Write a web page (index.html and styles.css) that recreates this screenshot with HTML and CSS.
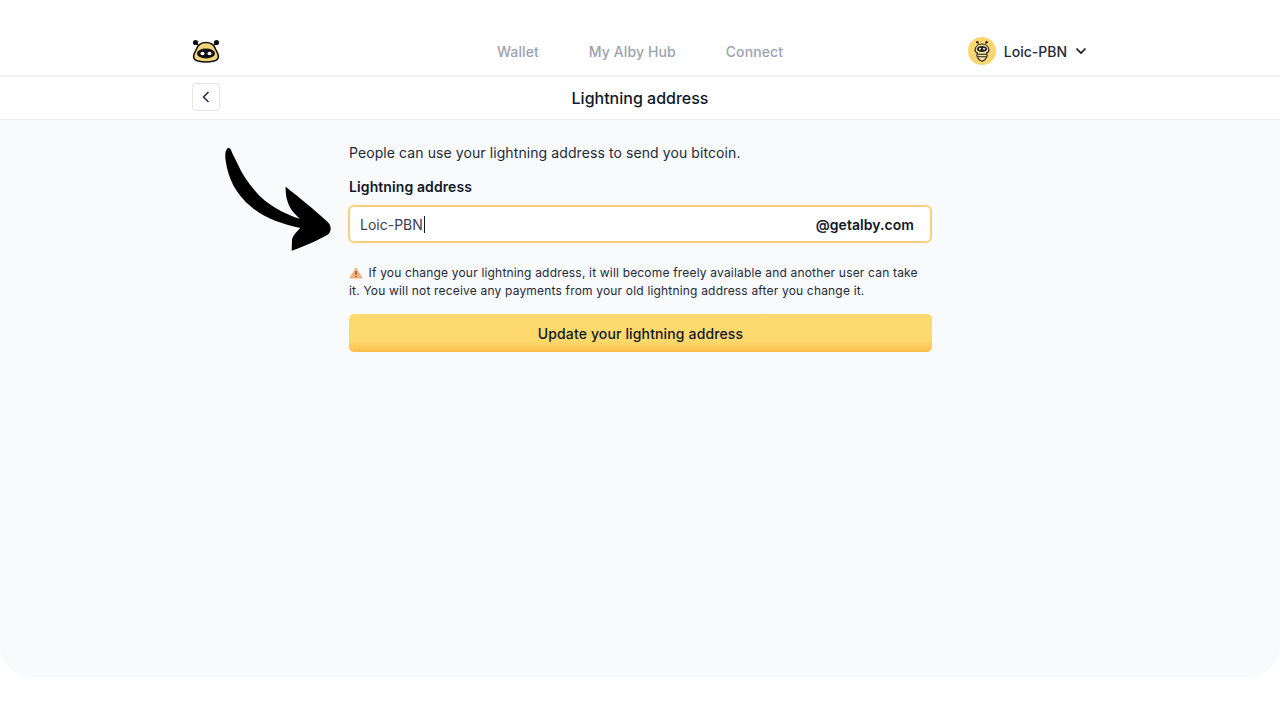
FILE: index.html
```html
<!DOCTYPE html>
<html lang="en">
  <head>
    <meta charset="UTF-8" />
    <meta name="viewport" content="width=device-width, initial-scale=1.0" />
    <title>Lightning address</title>
    <link rel="stylesheet" href="styles.css">
  </head>
  <body>
    <div class="app">
      <header class="topbar">
        <div class="container topbar-inner">
          <svg class="logo" width="28" height="24" viewBox="0 0 28 24">
            <circle cx="3.5" cy="3.5" r="2.6" fill="#111" />
            <circle cx="24.5" cy="3.5" r="2.6" fill="#111" />
            <path d="M3.5 3.5 8 8M24.5 3.500 20 8" stroke="#111" stroke-width="1.2" />
            <path d="M14 3.5C9 3.500 6 6 4.500 10 3 13 1.800 15 1.600 17 1.500 20 4 21.500 6 22 11 23.200 17 23.200 22 22 24 21.500 26.500 20 26.400 17 26.200 15 25 13 23.500 10 22 6 19 3.500 14 3.500Z" fill="#f2d579" stroke="#111" stroke-width="1.6" />
            <ellipse cx="14" cy="14.500" rx="9" ry="5" fill="#111" />
            <ellipse cx="10.500" cy="14.500" rx="2" ry="1.800" fill="#fff" />
            <ellipse cx="17.500" cy="14.500" rx="2" ry="1.800" fill="#fff" />
          </svg>
          <nav class="nav">
            <a>Wallet</a>
            <a>My Alby Hub</a>
            <a>Connect</a>
          </nav>
          <div class="account">
            <svg class="avatar" width="28" height="28" viewBox="0 0 30 30">
              <circle cx="15" cy="15" r="15" fill="#fad671" />
              <circle cx="10" cy="5.500" r="1.300" fill="#222" />
              <circle cx="20" cy="5.500" r="1.300" fill="#222" />
              <path d="M10 5.500 12 9M20 5.500 18 9" stroke="#222" stroke-width=".8" />
              <path d="M15 7.500C11 7.500 8 10 7.600 13.500 7.400 15.500 8.500 16.500 10 16.800L9.500 20C10.500 23.500 13 25.500 15 26 17 25.500 19.500 23.500 20.500 20L20 16.800C21.500 16.500 22.600 15.500 22.400 13.500 22 10 19 7.500 15 7.500Z" fill="#f5e3a4" stroke="#222" stroke-width="1.200" />
              <ellipse cx="15" cy="12.800" rx="5.500" ry="3.200" fill="#222" />
              <circle cx="12.800" cy="12.600" r="1.100" fill="#fff" />
              <circle cx="17.200" cy="12.600" r="1.100" fill="#fff" />
              <path d="M10 18.500H20M10.500 21.200H19.500" stroke="#222" stroke-width="1.200" />
            </svg>
            <span class="account-name">Loic-PBN</span>
            <svg class="chevron" width="12" height="8" viewBox="0 0 12 8">
              <path d="M1.500 1.500 6 6 10.500 1.500" fill="none" stroke="#111827" stroke-width="1.700" />
            </svg>
          </div>
        </div>
      </header>

      <div class="subbar">
        <div class="container subbar-inner">
          <button class="back">
            <svg width="8" height="12" viewBox="0 0 8 12">
              <path d="M6.500 1 1.500 6 6.500 11" fill="none" stroke="#1f2937" stroke-width="1.500" />
            </svg>
          </button>
          <h1>Lightning address</h1>
        </div>
      </div>

      <main class="content">
        <p class="intro">People can use your lightning address to send you bitcoin.</p>
        <label class="field-label">Lightning address</label>
        <div class="input">
          <span class="input-value">Loic-PBN</span>
          <span class="input-suffix">@getalby.com</span>
        </div>
        <p class="warning"><svg class="warn-icon" width="14" height="12" viewBox="0 0 14 12"><path d="M7 1 13 11H1Z" fill="#f3b27a" stroke="#f3b27a" stroke-linejoin="round" /><path d="M7 4V8M7 9V10.300" stroke="#6b4423" stroke-width="1.200" /></svg> If you change your lightning address, it will become freely available and another user can take it. You will not receive any payments from your old lightning address after you change it.</p>
        <button class="submit">Update your lightning address</button>
      </main>

      <svg class="arrow" width="120" height="115" viewBox="0 0 360 345">
        <path d="M38 25C30 32 29 48 33 68 40 112 60 162 112 203 150 234 200 252 256 264 246 274 232 288 231 300L230 332C270 318 310 300 338 284 350 276 350 256 338 246 300 210 250 170 212 140 211 160 214 182 226 204 234 218 246 228 254 236 215 224 180 205 150 182 112 150 84 108 68 72 58 52 52 40 48 30 46 25 42 23 38 25Z" fill="#000" />
      </svg>
    </div>
  </body>
</html>
```

FILE: styles.css
```css
* {
  box-sizing: border-box;
}
body {
  margin: 0;
  background: white;
  font-family: Inter, "Liberation Sans", sans-serif;
  color: #111827;
}
.app {
  position: relative;
  height: 677px;
  background: #f8fafc;
  border-radius: 0 0 32px 32px;
}
.container {
  width: 896px;
  margin: 0 auto;
}
.topbar {
  height: 77px;
  background: white;
  border-bottom: 2px solid #f0f1f3;
}
.topbar-inner {
  height: 75px;
  padding-top: 27px;
  display: grid;
  grid-template-columns: 1fr auto 1fr;
  align-items: center;
}
.logo {
  display: block;
}
.nav {
  display: flex;
  gap: 50px;
  font-size: 14px;
  font-weight: 500;
  letter-spacing: 0.1px;
  color: #9ca3af;
}
.account {
  display: flex;
  align-items: center;
  justify-content: flex-end;
  padding-right: 1px;
}
.account-name {
  margin-left: 8px;
  font-size: 14px;
  font-weight: 500;
  color: #1f2937;
}
.chevron {
  margin-left: 8px;
}
.subbar {
  height: 43px;
  background: white;
  border-bottom: 1px solid #eceef1;
}
.subbar-inner {
  position: relative;
  height: 42px;
  display: flex;
  align-items: center;
  justify-content: center;
}
.back {
  position: absolute;
  left: 0;
  top: 6px;
  width: 28px;
  height: 28px;
  padding: 0;
  display: flex;
  align-items: center;
  justify-content: center;
  background: white;
  border: 1px solid #e2e4e8;
  border-radius: 4px;
}
h1 {
  margin: 0;
  font-size: 16px;
  font-weight: 500;
  color: #111827;
}
.content {
  width: 584px;
  margin: 0 auto;
  padding-top: 23px;
}
.intro {
  margin: 0 0 14px;
  padding-left: 1px;
  font-size: 14px;
  line-height: 20px;
  letter-spacing: 0.09px;
  color: #1f2937;
}
.field-label {
  display: block;
  margin-bottom: 8px;
  padding-left: 1px;
  font-size: 14px;
  line-height: 20px;
  font-weight: 600;
  letter-spacing: 0.1px;
}
.input {
  height: 38px;
  padding: 0 16px 0 10px;
  display: flex;
  align-items: center;
  justify-content: space-between;
  background: white;
  border: 2px solid #f7d07a;
  border-radius: 6px;
  font-size: 14px;
}
.input-value {
  padding-right: 1px;
  border-right: 1px solid #111827;
  color: #374151;
}
.input-suffix {
  font-weight: 600;
  letter-spacing: 0.05px;
}
.warning {
  margin: 21px 0 14px;
  padding-left: 1px;
  font-size: 12px;
  line-height: 18px;
  letter-spacing: 0.18px;
  color: #1f2937;
}
.warn-icon {
  vertical-align: -2px;
  margin-right: 2px;
}
.submit {
  display: block;
  width: 583px;
  height: 38px;
  margin-left: 1px;
  padding: 0;
  border: none;
  border-radius: 5px;
  background: linear-gradient(#fedb6f 0, #fdd96d 70%, #f9c04a 100%);
  font-family: inherit;
  font-size: 14px;
  font-weight: 500;
  letter-spacing: 0.14px;
  color: #111827;
}
.arrow {
  position: absolute;
  left: 215px;
  top: 140px;
}
```
